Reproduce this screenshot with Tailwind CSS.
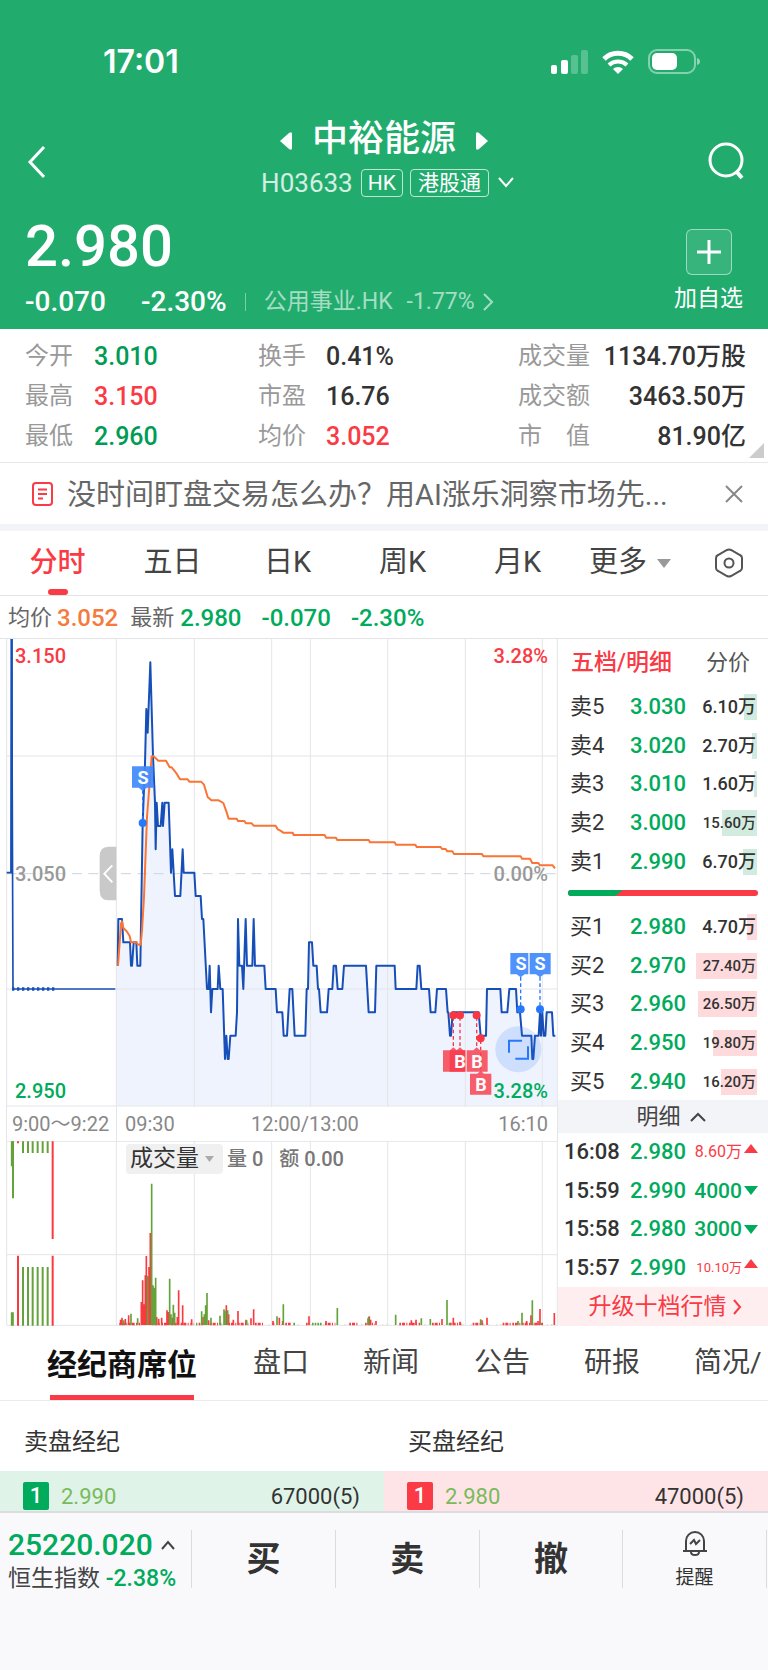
<!DOCTYPE html>
<html lang="zh-CN">
<head>
  <meta charset="UTF-8" />
  <meta name="viewport" content="width=device-width, initial-scale=1.0" />
  <title>中裕能源 H03633</title>
  <script src="https://cdn.jsdelivr.net/npm/@tailwindcss/browser@4"></script>
</head>
<body class="min-h-screen flex flex-col bg-white text-[#333] font-[Roboto,'Noto_Sans_CJK_SC',sans-serif] overflow-x-hidden">

  <header class="bg-[#21ac6e] text-white h-[329px] flex flex-col">
    <!-- status bar -->
    <div class="flex items-center justify-between h-[124px] pl-[103px] pr-[68px]">
      <span class="font-[Inter,sans-serif] font-semibold text-[32px] leading-9">17:01</span>
      <div class="flex items-center gap-[14px]">
        <svg width="38" height="24" viewBox="0 0 38 24" fill="#fff">
          <rect x="1" y="15" width="6" height="9" rx="2" />
          <rect x="11" y="10" width="7" height="14" rx="2" />
          <rect x="21" y="5" width="7" height="19" rx="2" opacity=".25" />
          <rect x="31" y="0" width="7" height="24" rx="2" opacity=".25" />
        </svg>
        <svg width="32" height="24" viewBox="0 0 32 24" fill="none" stroke="#fff" stroke-width="5">
          <path d="M2 9a20 20 0 0 1 28 0" />
          <path d="M7 15a13 13 0 0 1 18 0" stroke-width="4" />
          <path d="M16 24l-5-5a7 7 0 0 1 10 0z" fill="#fff" stroke="none" />
        </svg>
        <svg width="52" height="26" viewBox="0 0 52 26">
          <rect x="1" y="1" width="46" height="23" rx="8" fill="none" stroke="#fff" stroke-opacity=".45" stroke-width="2" />
          <rect x="4" y="4" width="25" height="17" rx="5" fill="#fff" />
          <path d="M49 9v7q3-1 3-3.500t-3-3.500" fill="#fff" opacity=".5" />
        </svg>
      </div>
    </div>

    <!-- stock title -->
    <div class="flex items-center justify-between h-[76px] px-6">
      <button aria-label="返回" class="w-10 h-10">
        <svg width="24" height="36" viewBox="0 0 24 36" fill="none" stroke="#fff" stroke-width="3"><path d="M20 3L6 18L20 33" /></svg>
      </button>
      <div class="flex flex-col items-center pr-1">
        <div class="flex items-center gap-5 h-[42px]">
          <svg width="12" height="18" viewBox="0 0 12 18" fill="#fff"><path d="M0 9L9 1Q12-1 12 2V16Q12 19 9 17z" /></svg>
          <h1 class="font-medium text-4xl leading-9 pb-1">中裕能源</h1>
          <svg width="12" height="18" viewBox="0 0 12 18" fill="#fff"><path d="M12 9L3 1Q0-1 0 2V16Q0 19 3 17z" /></svg>
        </div>
        <div class="flex items-center h-[42px] pl-2 text-[21px]">
          <span class="text-[26px] leading-7 text-white/80 mr-2">H03633</span>
          <span class="border border-white/70 rounded px-[6px] h-7 leading-[26px] mr-[7px]">HK</span>
          <span class="border border-white/70 rounded px-[7px] h-7 leading-[26px]">港股通</span>
          <svg class="ml-2" width="18" height="12" viewBox="0 0 18 12" fill="none" stroke="#fff" stroke-width="2"><path d="M2 1L9 9L16 1" /></svg>
        </div>
      </div>
      <button aria-label="搜索" class="w-9 h-10">
        <svg width="36" height="40" viewBox="0 0 36 40" fill="none" stroke="#fff" stroke-width="3"><circle cx="18" cy="18" r="16" /><path d="M28 29L34 36" stroke-width="4" /></svg>
      </button>
    </div>

    <!-- last price -->
    <div class="flex justify-between flex-1 pl-[25px] pr-[25px]">
      <div>
        <div class="text-[58px] leading-[64px] font-medium mt-[14px]">2.980</div>
        <div class="flex items-center h-9 mt-[6px]">
          <span class="text-[28px] font-medium w-[116px]">-0.070</span>
          <span class="text-[28px] font-medium">-2.30%</span>
          <span class="w-px h-[18px] bg-white/40 mx-[18px]"></span>
          <a href="#" class="flex items-center text-white/60 text-[23px] leading-8">公用事业.HK<span class="ml-[14px]">-1.77%</span>
            <svg class="ml-2" width="11" height="20" viewBox="0 0 11 20" fill="none" stroke="#fff" stroke-opacity=".6" stroke-width="2"><path d="M1 2L9 10L1 18" /></svg>
          </a>
        </div>
      </div>
      <button class="flex flex-col items-center pt-[29px]">
        <span class="flex items-center justify-center w-[46px] h-[46px] rounded-md border border-white/50 bg-white/10">
          <svg width="24" height="24" viewBox="0 0 24 24" stroke="#fff" stroke-width="3"><path d="M12 0V24M0 12H24" /></svg>
        </span>
        <span class="text-[23px] leading-8 mt-2">加自选</span>
      </button>
    </div>
  </header>

  <!-- quote summary -->
  <section class="relative grid grid-cols-[233px_1fr_auto] h-[134px] pt-2 pl-[25px] pr-[22px] border-b border-[#e8e8ea] text-2xl leading-10">
    <dl class="grid grid-cols-[69px_auto] auto-rows-[40px] font-medium text-[25px]">
      <dt class="text-[#999] text-2xl leading-[38px] font-normal">今开</dt><dd class="text-[#009c55] leading-10">3.010</dd>
      <dt class="text-[#999] text-2xl leading-[38px] font-normal">最高</dt><dd class="text-[#fa3a44] leading-10">3.150</dd>
      <dt class="text-[#999] text-2xl leading-[38px] font-normal">最低</dt><dd class="text-[#009c55] leading-10">2.960</dd>
    </dl>
    <dl class="grid grid-cols-[68px_auto] auto-rows-[40px] font-medium text-[25px]">
      <dt class="text-[#999] text-2xl leading-[38px] font-normal">换手</dt><dd class="leading-10">0.41%</dd>
      <dt class="text-[#999] text-2xl leading-[38px] font-normal">市盈</dt><dd class="leading-10">16.76</dd>
      <dt class="text-[#999] text-2xl leading-[38px] font-normal">均价</dt><dd class="text-[#fa3a44] leading-10">3.052</dd>
    </dl>
    <dl class="grid grid-cols-[72px_156px] auto-rows-[40px] font-medium text-[25px] whitespace-nowrap">
      <dt class="text-[#999] text-2xl leading-[38px] font-normal">成交量</dt><dd class="leading-10 flex justify-end">1134.70万股</dd>
      <dt class="text-[#999] text-2xl leading-[38px] font-normal">成交额</dt><dd class="leading-10 flex justify-end">3463.50万</dd>
      <dt class="text-[#999] text-2xl leading-[38px] font-normal flex justify-between"><span>市</span><span>值</span></dt><dd class="leading-10 flex justify-end">81.90亿</dd>
    </dl>
    <svg class="absolute right-1 bottom-1" width="15" height="15" viewBox="0 0 15 15" fill="#ccc"><path d="M15 0V15H0z" /></svg>
  </section>

  <!-- notice -->
  <section class="flex items-center h-[61px] pl-8 pr-[25px]">
    <svg width="21" height="24" viewBox="0 0 21 24" fill="none" stroke="#fa3a44" stroke-width="2"><rect x="1" y="1" width="19" height="22" rx="3" /><path d="M6 7.500H15M6 12H15M6 16.500H11" /></svg>
    <p class="flex-1 ml-[14px] pt-[2px] text-[29px] leading-10 text-[#666] truncate">没时间盯盘交易怎么办？用AI涨乐洞察市场先...</p>
    <button aria-label="关闭" class="w-[18px] h-[18px]">
      <svg width="18" height="18" viewBox="0 0 18 18" stroke="#888" stroke-width="2"><path d="M1 1L17 17M17 1L1 17" /></svg>
    </button>
  </section>
  <div class="h-[7px] bg-[#f3f4f8]"></div>

  <!-- period tabs -->
  <nav class="flex items-center h-[65px] border-b border-[#e4e4e6] pr-6 text-[29px] text-[#444]">
    <button class="relative flex-1 h-full text-[28px] text-[#fa3a44] font-medium">分时<span class="absolute left-1/2 -ml-[10px] bottom-0 w-5 h-[6px] rounded-full bg-[#fa3a44]"></span></button>
    <button class="flex-1">五日</button>
    <button class="flex-1">日K</button>
    <button class="flex-1">周K</button>
    <button class="flex-1">月K</button>
    <button class="w-[139px] pl-[14px] flex items-center gap-[10px]">更多<svg width="14" height="9" viewBox="0 0 14 9" fill="#999"><path d="M0 0H14L7 9z" /></svg></button>
    <button aria-label="设置">
      <svg width="30" height="30" viewBox="0 0 30 30" fill="none" stroke="#555" stroke-width="2"><path d="M13 2Q15 1 17 2L26 7Q28 8 28 10V20Q28 22 26 23L17 28Q15 29 13 28L4 23Q2 22 2 20V10Q2 8 4 7z" /><circle cx="15" cy="15" r="4.500" /></svg>
    </button>
  </nav>

  <div class="flex items-center h-[42px] pt-[2px] pl-2 text-2xl font-medium text-[#00ab5c]">
    <span class="text-[22px] font-normal text-[#666]">均价</span>
    <span class="ml-[5px] text-[#f57a3c]">3.052</span>
    <span class="ml-3 text-[22px] font-normal text-[#666]">最新</span>
    <span class="ml-[6px]">2.980</span>
    <span class="ml-5">-0.070</span>
    <span class="ml-5">-2.30%</span>
  </div>

  <main class="flex border-t border-[#e4e4e6]">
    <div class="flex-1 min-w-0">
      <!-- price chart: the plotted group uses three units per pixel -->
      <div class="relative text-xl leading-6 font-medium">
        <svg class="block w-full h-auto" viewBox="0 0 558 468">
          <g transform="scale(.33333) translate(0 -26)" fill="none">
            <path d="M349 1426V1006L355 866H366L370 936H390L393 1006H396L401 936H409L412 1006H421L428 578L435 400L439 236L443 307L451 96L459 376L465 517L467 657L470 517L474 587H482L487 517L489 587L494 517H506L513 727L517 657L525 797H541L548 657L551 727H583L587 797H602L606 866H610L621 1076H626L629 1006L633 1146L637 1076H653L656 1006L661 1076H668L675 1286L679 1216L683 1286H686L691 1216H707L711 1146L714 866L718 1006H726L730 1076L737 866L741 1006H757L761 866L765 1006H793L797 1076H827L831 1146H847L851 1216H861L869 1076H877L884 1216H916L920 1076H924L927 936H936L940 1006H950L954 1076H957L962 1146H981L986 1076H997L1001 1006H1008L1013 1076H1027L1032 1006H1098L1106 1146H1125L1129 1006H1184L1187 1076H1249L1253 1006H1259L1264 1076H1287L1292 1146H1306L1311 1076H1338L1343 1146H1345L1350 1216H1353L1358 1146H1436L1442 1216H1458L1461 1076H1501L1505 1146H1522L1528 1076H1548L1552 1146H1560L1566 1216H1594L1597 1286H1600L1605 1216H1616L1620 1146L1623 1216L1627 1146L1631 1216H1636L1640 1146H1656L1660 1216H1672V1426z" fill="#eff3fe" />
            <path d="M20 26V1430M349 26V1430M583 26V1430M815 26V1430M931 26V1430M1163 26V1430M1396 26V1430M1627 26V1430M1672 26V1430M20 377H1672M20 1076H1672M20 1427H1672" stroke="#e4e5e8" stroke-width="3" />
            <path d="M20 730H1672" stroke="#ccd5df" stroke-width="3" stroke-dasharray="30 19" />
            <path d="M20 727H33L35 26L39 1076H346" stroke="#174fb8" stroke-width="5" />
            <path d="M35 26V727" stroke="#174fb8" stroke-width="7" />
            <path d="M36 1076H165" stroke="#174fb8" stroke-width="11" stroke-dasharray="7 8" />
            <path d="M353 1006L355 866H366L370 936H390L393 1006H396L401 936H409L412 1006H421L428 578L435 400L439 236L443 307L451 96L459 376L465 517L467 657L470 517L474 587H482L487 517L489 587L494 517H506L513 727L517 657L525 797H541L548 657L551 727H583L587 797H602L606 866H610L621 1076H626L629 1006L633 1146L637 1076H653L656 1006L661 1076H668L675 1286L679 1216L683 1286H686L691 1216H707L711 1146L714 866L718 1006H726L730 1076L737 866L741 1006H757L761 866L765 1006H793L797 1076H827L831 1146H847L851 1216H861L869 1076H877L884 1216H916L920 1076H924L927 936H936L940 1006H950L954 1076H957L962 1146H981L986 1076H997L1001 1006H1008L1013 1076H1027L1032 1006H1098L1106 1146H1125L1129 1006H1184L1187 1076H1249L1253 1006H1259L1264 1076H1287L1292 1146H1306L1311 1076H1338L1343 1146H1345L1350 1216H1353L1358 1146H1436L1442 1216H1458L1461 1076H1501L1505 1146H1522L1528 1076H1548L1552 1146H1560L1566 1216H1594L1597 1286H1600L1605 1216H1616L1620 1146L1623 1216L1627 1146L1631 1216H1636L1640 1146H1656L1660 1216H1666" stroke="#174fb8" stroke-width="6" stroke-linejoin="round" />
            <path d="M354 1006L363 880L366 873L370 893L380 903L389 917L393 936H410L414 943H422L426 900L432 800L441 560L455 378H461L475 391H498L509 411H515L530 430L540 447H563L568 454H603L612 463L623 500L634 510H656L670 518L678 540L686 565H710L714 572H733L738 579H755L761 586H827L833 597L840 600L850 607H878L881 614H974L978 622H1008L1012 629H1106L1110 636H1184L1188 643H1246L1250 650H1322L1326 656H1337L1342 663H1357L1362 671H1446L1450 678H1562L1566 685H1590L1597 698H1615L1620 705H1658L1665 714" stroke="#fa7535" stroke-width="6" stroke-linejoin="round" />
            <path d="M428 480V570M1562 1040V1130M1620 1040V1130" stroke="#2878fb" stroke-width="4" stroke-dasharray="11 8" />
            <path d="M1360 1160V1255M1380 1160V1255M1430 1160V1255M1442 1230V1325" stroke="#f93643" stroke-width="4" stroke-dasharray="11 8" />
            <g fill="#2878fb"><circle cx="428" cy="578" r="12" /><circle cx="1562" cy="1137" r="12" /><circle cx="1620" cy="1137" r="12" /></g>
            <g fill="#f93643"><circle cx="1360" cy="1155" r="12" /><circle cx="1380" cy="1155" r="12" /><circle cx="1430" cy="1155" r="12" /><circle cx="1442" cy="1224" r="12" /></g>
            <!-- trade markers -->
            <g fill="#4089fc" fill-opacity=".92">
              <path d="M396 408H460V472H440L428 482L416 472H396z" />
              <path d="M1531 968H1585V1032H1574L1562 1041L1550 1032H1531zM1589 968H1652V1032H1632L1620 1041L1608 1032H1589z" />
            </g>
            <g fill="#f93a4a" fill-opacity=".82">
              <path d="M1329 1260H1350L1360 1251L1370 1260H1396V1324H1329z" />
              <path d="M1349 1260H1370L1380 1251L1390 1260H1396V1324H1349z" />
              <path d="M1400 1260H1420L1430 1251L1440 1260H1463V1324H1400z" />
              <path d="M1410 1330H1432L1442 1321L1452 1330H1474V1393H1410z" />
            </g>
            <circle cx="1555" cy="1257" r="69" fill="#2878fb" fill-opacity=".16" />
            <path d="M1527 1267V1231H1566M1584 1248V1285H1546" stroke="#2878fb" stroke-width="6" />
            <path d="M349 649H325Q299 649 299 680V780Q299 810 325 810H349z" fill="#c9c9c9" />
            <path d="M337 705L313 730L337 756" stroke="#fff" stroke-width="6" />
          </g>
          <g fill="#fff" font-size="18" font-weight="700" text-anchor="middle">
            <text x="143" y="145">S</text>
            <text x="521" y="331">S</text>
            <text x="540" y="331">S</text>
            <text x="460" y="429">B</text>
            <text x="477" y="429">B</text>
            <text x="481" y="452">B</text>
          </g>
        </svg>
        <span class="absolute left-[15px] top-[5px] text-[#fa3a44]">3.150</span>
        <span class="absolute left-[15px] top-[223px] text-[#999]">3.050</span>
        <span class="absolute left-[15px] bottom-1 text-[#00ab5c]">2.950</span>
        <span class="absolute right-[10px] top-[5px] text-[#fa3a44]">3.28%</span>
        <span class="absolute right-[10px] top-[223px] text-[#999]">0.00%</span>
        <span class="absolute right-[10px] bottom-1 text-[#00ab5c]">3.28%</span>
      </div>

      <div class="flex items-center h-[34px] ml-[6px] border-x border-[#e4e5e8] text-xl text-[#888]">
        <span class="w-[110px] h-full flex items-center pl-[5px] border-r border-[#e4e5e8] whitespace-nowrap">9:00～9:22</span>
        <div class="flex-1 grid grid-cols-[126px_1fr_auto] pl-2 pr-[9px]"><span>09:30</span><span>12:00/13:00</span><span>16:10</span></div>
      </div>

      <!-- volume -->
      <div class="relative">
        <svg class="block w-full h-auto" viewBox="0 0 558 185">
          <g transform="scale(.33333) translate(0 -152)" fill="none">
            <path d="M20 153H1672M20 493H1672M20 705H1672M20 153V706M349 153V706M583 153V706M815 153V706M931 153V706M1163 153V706M1396 153V706M1627 153V706M1672 153V706" stroke="#e4e5e8" stroke-width="3" />
            <path d="M349 703H1672" stroke="#c9dcbf" stroke-width="3" stroke-dasharray="3 9 4 22" />
            <path d="M358 701H420M455 701H580M596 701H608M630 701H665M685 701H745M765 701H790M818 701H825M856 701H872M918 701H928M975 701H1006M1048 701H1072M1095 701H1125M1198 701H1260M1296 701H1320M1350 701H1386M1418 701H1450M1508 701H1630" stroke="#fb3a40" stroke-width="8" stroke-dasharray="5 3 9 4 3 5" />
            <path d="M588 701H592M880 701H888M936 701H968M1346 701H1352" stroke="#64a33b" stroke-width="8" stroke-dasharray="5 3" />
            <path d="M54 153V159M158 153V446M54 496V706M158 496V706" stroke="#fb3a40" stroke-width="6" />
            <path d="M39 153V324M69 153V188M84 153V188M98 153V188M113 153V188M128 153V188M143 153V188M69 530V706M84 530V706M98 530V706M113 530V706M128 530V706M143 530V706" stroke="#64a33b" stroke-width="6" />
            <path d="M37 153V228M37 666V706" stroke="#64a33b" stroke-width="9" />
            <path d="M362 704V688M366 704V682M376 704V686M386 704V675M424 704V635M428 704V570M432 704V642M436 704V555M439 704V497M443 704V560M447 704V530M451 704V428M470 704V680M476 704V685M485 704V682M501 704V660M505 704V665M517 704V682M532 704V680M536 704V600M548 704V645M575 704V687M609 704V680M626 704V690M679 704V645M686 704V672M700 704V688M714 704V662M738 704V688M753 704V684M761 704V657M819 704V692M838 704V682M848 704V692M927 704V678M978 704V692M1108 704V678M1112 704V688M1128 704V692M1234 704V690M1248 704V688M1326 704V686M1360 704V682M1380 704V694M1446 704V690M1461 704V682M1580 704V692M1593 704V675M1614 704V692M1620 704V656M1663 704V668" stroke="#fb3a40" stroke-width="5" />
            <path d="M371 704V690M393 704V670M413 704V684M443 704V556M455 704V280M459 704V585M463 704V592M467 704V562M509 704V565M513 704V672M520 704V643M524 704V667M605 704V663M613 704V672M617 704V645M621 704V608M633 704V682M660 704V676M672 704V657M675 704V662M683 704V660M740 704V690M831 704V678M850 704V642M1012 704V653M1104 704V684M1106 704V680M1187 704V673M1264 704V684M1291 704V686M1341 704V629M1442 704V687M1554 704V692M1566 704V667M1597 704V630M1624 704V698" stroke="#64a33b" stroke-width="5" />
          </g>
        </svg>
        <div class="absolute left-[126px] top-[3px] flex items-center text-xl text-[#777]">
          <button class="flex items-center gap-[6px] h-[30px] pl-1 pr-[9px] rounded bg-[#f0f0f0] text-[#333] text-[23px]">成交量<svg width="9" height="6" viewBox="0 0 9 6" fill="#aaa"><path d="M0 0H9L4.500 6z" /></svg></button>
          <span class="ml-1 font-medium">量 0</span>
          <span class="ml-4 font-medium">额 0.00</span>
        </div>
      </div>
    </div>

    <!-- order book -->
    <aside class="w-[210px] shrink-0 flex flex-col text-[22px] leading-7">
      <div class="flex items-center justify-between h-12 pl-[13px] pr-[18px]">
        <button class="text-[#fa3a44] font-medium text-[23px]">五档/明细</button>
        <button class="text-[#555]">分价</button>
      </div>
      <div id="asks" class="h-[193px] grid grid-rows-5"></div>
      <svg class="block ml-[10px] my-[10px]" width="190" height="7" viewBox="0 0 190 7"><rect width="190" height="6" rx="3" fill="#fa3a44" /><path d="M3 0H55L47 6H3A3 3 0 0 1 3 0" fill="#00ab5c" /></svg>
      <div id="bids" class="h-[193px] grid grid-rows-5"></div>
      <button class="flex items-center justify-center gap-[9px] h-[33px] pl-4 bg-[#f3f4f8] text-[#444]">明细<svg width="16" height="10" viewBox="0 0 16 10" fill="none" stroke="#444" stroke-width="2"><path d="M1 9L8 2L15 9" /></svg></button>
      <div id="trades" class="h-[154px] grid grid-rows-4"></div>
      <a href="#" class="flex items-center justify-center gap-[6px] flex-1 pl-1 bg-[#ffeef0] text-[#fa3a44] text-[23px]">升级十档行情<svg width="9" height="16" viewBox="0 0 9 16" fill="none" stroke="#fa3a44" stroke-width="2"><path d="M1 1L7 8L1 15" /></svg></a>
    </aside>
  </main>

  <!-- info tabs -->
  <nav class="flex items-center h-[75px] border-b border-[#ececee] pl-[47px] text-[28px] text-[#444] leading-[78px] whitespace-nowrap overflow-hidden shrink-0">
    <button class="relative h-full text-[30px] font-bold text-[#111]">经纪商席位<span class="absolute inset-x-[3px] bottom-0 h-[5px] bg-[#fa3a44]"></span></button>
    <button class="ml-14">盘口</button>
    <button class="ml-[54px]">新闻</button>
    <button class="ml-[55px]">公告</button>
    <button class="ml-[54px]">研报</button>
    <button class="ml-[54px]">简况/</button>
  </nav>

  <section class="grid grid-cols-2">
    <h2 class="pl-6 text-2xl leading-[82px] h-[70px]">卖盘经纪</h2>
    <h2 class="pl-6 text-2xl leading-[82px] h-[70px]">买盘经纪</h2>
    <div class="flex items-end h-10 pl-[23px] pr-6 bg-[#dff3e9] text-[22px] leading-7">
      <span class="w-[26px] h-7 mb-[1px] flex items-center justify-center rounded-[2px] bg-[#00ab5c] text-white font-medium">1</span>
      <span class="ml-3 text-[#7aba5c]">2.990</span>
      <span class="ml-auto">67000(5)</span>
    </div>
    <div class="flex items-end h-10 pl-[23px] pr-6 bg-[#fee4e6] text-[22px] leading-7">
      <span class="w-[26px] h-7 mb-[1px] flex items-center justify-center rounded-[2px] bg-[#fa3a44] text-white font-medium">1</span>
      <span class="ml-3 text-[#7aba5c]">2.980</span>
      <span class="ml-auto">47000(5)</span>
    </div>
  </section>

  <footer class="flex-1 bg-[#f9f9fc] border-t-2 border-[#dcdce0] pt-[17px]">
    <div class="flex h-[58px]">
      <button class="w-[192px] shrink-0 h-full border-r border-[#dcdce0] pl-2 pt-1 flex flex-col justify-center items-start text-[#00ab5c]">
        <span class="flex items-center gap-2 text-[30px] leading-9 font-medium">25220.020<svg width="14" height="10" viewBox="0 0 14 10" fill="none" stroke="#444" stroke-width="2"><path d="M1 9L7 2L13 9" /></svg></span>
        <span class="text-[23px] leading-8 font-medium whitespace-nowrap"><span class="font-normal text-[#444]">恒生指数</span> -2.38%</span>
      </button>
      <button class="flex-1 border-r border-[#dcdce0] text-[34px] font-bold">买</button>
      <button class="flex-1 border-r border-[#dcdce0] text-[34px] font-bold">卖</button>
      <button class="flex-1 border-r border-[#dcdce0] text-[34px] font-bold">撤</button>
      <button class="flex-1 border-r border-[#dcdce0] flex flex-col items-center justify-between text-[19px] leading-5 mr-px">
        <svg width="26" height="27" viewBox="0 0 26 27" fill="none" stroke="#444" stroke-width="2"><path d="M1 21H25M4 21V11A9 9 0 0 1 22 11V21M9 22Q9 25 13 25T17 22M8 14L12 10L14 14L18 10" /></svg>
        提醒
      </button>
    </div>
  </footer>

  <script>
    // [label, price, quantity, depth bar width]
    const asks = [
      ["卖5", "3.030", "6.10万", 13],
      ["卖4", "3.020", "2.70万", 5],
      ["卖3", "3.010", "1.60万", 3],
      ["卖2", "3.000", "15.60万", 35],
      ["卖1", "2.990", "6.70万", 14]
    ];
    const bids = [
      ["买1", "2.980", "4.70万", 10],
      ["买2", "2.970", "27.40万", 61],
      ["买3", "2.960", "26.50万", 59],
      ["买4", "2.950", "19.80万", 44],
      ["买5", "2.940", "16.20万", 36]
    ];
    const trades = [
      ["16:08", "2.980", "8.60万", true],
      ["15:59", "2.990", "4000", false],
      ["15:58", "2.980", "3000", false],
      ["15:57", "2.990", "10.10万", true]
    ];

    function renderLevels(id, rows, barColor) {
      document.getElementById(id).innerHTML = rows.map(([label, price, qty, width]) => `
        <div class="relative flex items-center pl-[12px] pr-3 pt-[2px] whitespace-nowrap">
          <span class="absolute right-[11px] h-[26px] ${barColor}" style="width:${width}px"></span>
          <span class="w-[60px]">${label}</span>
          <span class="text-[#00ab5c] font-medium">${price}</span>
          <span class="relative ml-auto ${qty.length > 6 || /^\d\d/.test(qty) ? "text-[15px] font-medium" : "text-lg font-medium"}">${qty}</span>
        </div>
      `).join("");
    }

    renderLevels("asks", asks, "bg-[#d1ecdf]");
    renderLevels("bids", bids, "bg-[#fedadc]");

    document.getElementById("trades").innerHTML = trades.map(([time, price, qty, up]) => `
      <div class="flex items-center pl-[6px] pr-[10px] whitespace-nowrap">
        <span class="w-[66px] font-medium">${time}</span>
        <span class="text-[#00ab5c] font-medium">${price}</span>
        <span class="ml-auto ${up ? "text-[#fa3a44]" : "text-[#00ab5c] font-medium"} ${/^\d\d\./.test(qty) ? "text-[13px]" : up ? "text-base" : "text-[21px]"}">${qty}</span>
        <svg class="ml-[2px] ${up ? "mb-2" : ""}" width="14" height="9" viewBox="0 0 14 9" fill="${up ? "#fa3a44" : "#00ab5c"}"><path d="${up ? "M0 9H14L7 0z" : "M0 0H14L7 9z"}" /></svg>
      </div>
    `).join("");
  </script>
</body>
</html>
